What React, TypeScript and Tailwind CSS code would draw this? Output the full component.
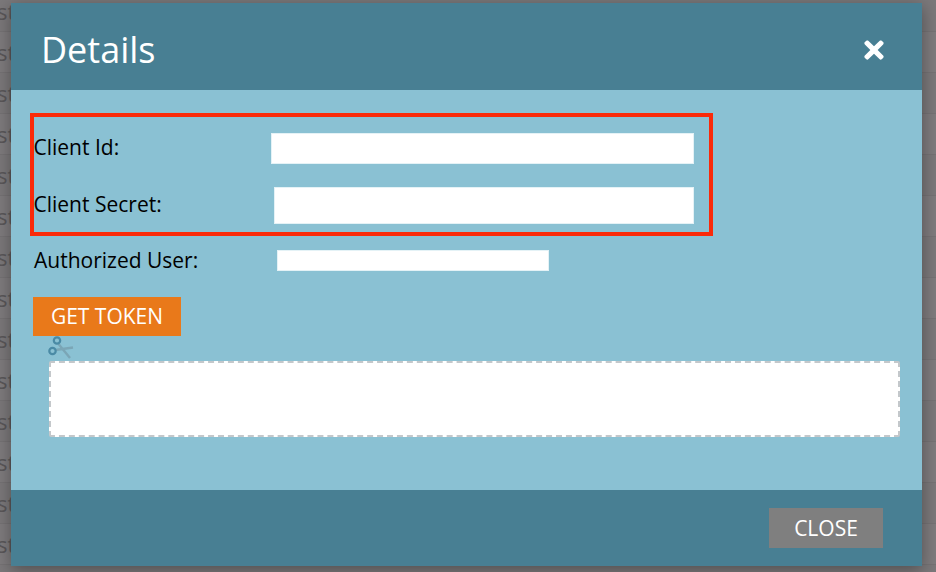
import { FaTimes } from 'react-icons/fa'

const rows = Array.from({ length: 15 }, (_, i) => i)

function Field({ label, inputClass, rowClass }: { label: string; inputClass: string; rowClass: string }) {
  return (
    <div className={`flex items-center justify-between ${rowClass}`}>
      <span className="text-[21px] leading-none text-black -mt-[3px] -ml-[0.5px]">{label}</span>
      <input readOnly className={`bg-white border border-[#e4f2f6] outline-none ${inputClass}`} />
    </div>
  )
}

function ScissorsIcon() {
  return (
    <svg width="26" height="25" viewBox="0 0 26 25" fill="none">
      <path d="M10.5 8 L22 22" stroke="#7ba6b6" strokeWidth="2.4" />
      <path d="M7.5 14 L25 11.5" stroke="#7ba6b6" strokeWidth="2.4" />
      <circle cx="9" cy="4.5" r="3.2" stroke="#4a8aa5" strokeWidth="2.2" />
      <circle cx="4.5" cy="15" r="3.2" stroke="#4a8aa5" strokeWidth="2.2" />
    </svg>
  )
}

export default function App() {
  return (
    <div className="relative w-[936px] h-[572px] overflow-hidden bg-[#7b787a] font-['Open_Sans',sans-serif]">
      {/* page behind the overlay */}
      <div className="-mt-[9px] flex flex-col">
        {rows.map((i) => (
          <div
            key={i}
            className={`h-[41px] shrink-0 flex items-center text-[22px] leading-none text-[#5a5759] border-b border-[#757274] ${i % 2 ? 'bg-[#7e7b7d]' : 'bg-[#7b787a]'}`}
          >
            <span className="-ml-[3px]">{i < 14 ? 'st' : ''}</span>
          </div>
        ))}
      </div>

      {/* modal */}
      <div className="absolute left-[11px] top-[3px] w-[911px] h-[563px] flex flex-col shadow-[0_4px_16px_rgba(0,0,0,0.35)]">
        <div className="h-[87px] shrink-0 bg-[#487f93] flex items-center justify-between pl-[30px] pr-[34px]">
          <h1 className="text-[36px] leading-none text-white mt-[7px]">Details</h1>
          <FaTimes className="text-white text-[28px] mt-[7px]" />
        </div>

        <div className="flex-1 bg-[#8ac1d3] flex flex-col">
          <div className="ml-[19px] mt-[23px] w-[683px] h-[123px] border-4 border-[#fa2a09] flex flex-col pr-[15px]">
            <Field label="Client Id:" rowClass="mt-[16px]" inputClass="w-[423px] h-[31px]" />
            <Field label="Client Secret:" rowClass="mt-[23px]" inputClass="w-[420px] h-[37px]" />
          </div>

          <div className="ml-[23px] mt-[14px] flex items-center">
            <span className="w-[243px] text-[21px] leading-none text-black">Authorized User:</span>
            <input readOnly className="w-[272px] h-[21px] bg-white border border-[#e4f2f6] outline-none" />
          </div>

          <button className="ml-[22px] mt-[26px] w-[148px] h-[39px] bg-[#e9791a] text-white text-[21px] leading-none text-center">
            GET TOKEN
          </button>

          <div className="ml-[37px] h-[25px]">
            <ScissorsIcon />
          </div>

          <div className="ml-[38px] w-[851px] h-[76px] bg-white rounded-[2px] border-2 border-dashed border-[#c4c8cb]" />
        </div>

        <div className="h-[76px] shrink-0 bg-[#487f93] flex items-start justify-end pt-[18px] pr-[39px]">
          <button className="w-[114px] h-[40px] bg-[#7f7f7f] text-white text-[21px] leading-none text-center">
            CLOSE
          </button>
        </div>
      </div>
    </div>
  )
}
